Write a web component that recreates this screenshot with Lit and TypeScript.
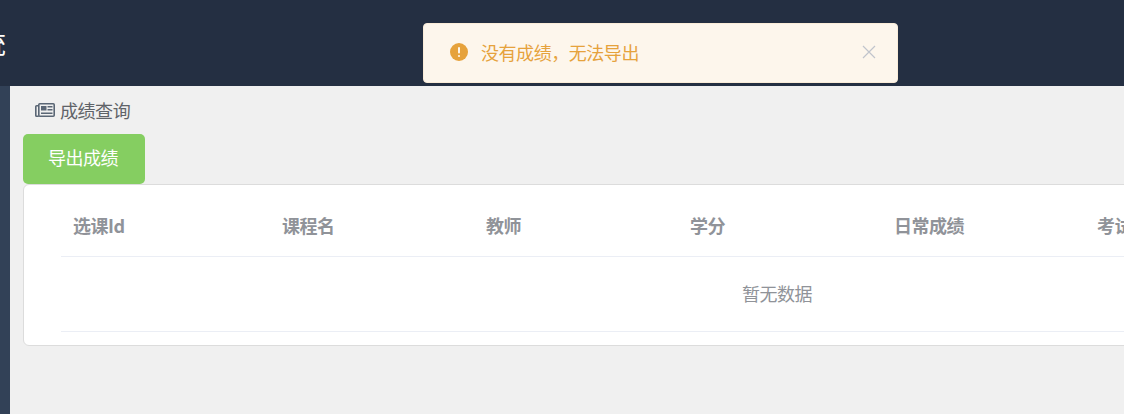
import { LitElement, html, css } from "lit";
import { customElement } from "lit/decorators.js";

const COLS: [string, number][] = [
  ["选课Id", 209],
  ["课程名", 204],
  ["教师", 204],
  ["学分", 204],
  ["日常成绩", 203],
  ["考试成绩", 204],
  ["总成绩", 204],
];

@customElement("app-root")
export class AppRoot extends LitElement {
  static styles = css`
    :host {
      display: block;
      position: relative;
      width: 1124px;
      height: 414px;
      overflow: hidden;
      background: #f0f0f0;
      font-family: "Noto Sans CJK SC", "Liberation Sans", sans-serif;
    }
    .header {
      height: 86px;
      background: #242f42;
      display: flex;
      align-items: center;
      overflow: hidden;
    }
    .logo {
      width: 6px;
      flex: none;
      display: flex;
      justify-content: flex-end;
      white-space: nowrap;
      color: #fff;
      font-size: 27px;
      line-height: 34px;
    }
    .body {
      display: flex;
      height: 328px;
    }
    .side {
      width: 10px;
      flex: none;
      background: #324157;
    }
    .main {
      flex: 1;
      min-width: 0;
      padding-left: 13px;
    }
    .crumb {
      height: 48px;
      box-sizing: border-box;
      padding: 12px 0 0 12px;
      display: flex;
      align-items: flex-start;
      gap: 5px;
      color: #5f6368;
      font-size: 18px;
      line-height: 24px;
      letter-spacing: -0.45px;
    }
    .crumb svg {
      margin-top: 5px;
      flex: none;
    }
    .btn {
      display: block;
      width: 122px;
      height: 50px;
      border: 0;
      border-radius: 5px;
      padding: 0 2px 4px 0;
      background: #85ce61;
      color: #fff;
      font: inherit;
      font-size: 18px;
      letter-spacing: -0.5px;
    }
    .card {
      width: 1508px;
      height: 162px;
      box-sizing: border-box;
      background: #fff;
      border: 1px solid #dcdcdc;
      border-radius: 6px;
      padding: 0 37px;
    }
    .thead {
      display: flex;
      height: 72px;
      box-sizing: border-box;
      border-bottom: 1px solid #ebeef5;
      align-items: center;
      padding-top: 8px;
    }
    .th {
      flex: none;
      box-sizing: border-box;
      padding-left: 12px;
      color: #909399;
      font-size: 18px;
      font-weight: 700;
      letter-spacing: -0.5px;
    }
    .empty {
      height: 75px;
      box-sizing: border-box;
      border-bottom: 1px solid #ebeef5;
      display: flex;
      align-items: center;
      justify-content: center;
      color: #909399;
      font-size: 18px;
      letter-spacing: -0.5px;
      padding-bottom: 2px;
    }
    .toast {
      position: absolute;
      left: 423px;
      top: 23px;
      width: 475px;
      height: 60px;
      box-sizing: border-box;
      background: #fdf6ec;
      border: 1px solid #faecd8;
      border-radius: 4px;
      display: flex;
      align-items: center;
      padding: 0 21px 2px 26px;
      color: #e6a23c;
      font-size: 18px;
      letter-spacing: -0.45px;
    }
    .toast .msg {
      flex: 1;
      margin-left: 13px;
    }
  `;

  render() {
    return html`
      <div class="header"><div class="logo">学生成绩管理系统</div></div>
      <div class="body">
        <div class="side"></div>
        <div class="main">
          <div class="crumb">
            <svg width="20" height="14" viewBox="0 0 20 14" fill="none" stroke="#5a6675" stroke-width="1.6">
              <rect x="3.8" y="0.8" width="15.4" height="12.4" rx="1"></rect>
              <path d="M3.8 2.8H1.6a.8.8 0 0 0-.8.8v8.8a.8.8 0 0 0 .8.8h2.2"></path>
              <rect x="6" y="3" width="5.5" height="4.5" fill="#5a6675" stroke="none"></rect>
              <path d="M12.5 3.8h5M12.5 6.8h5M6 10.3h11.5"></path>
            </svg>
            <span>成绩查询</span>
          </div>
          <button class="btn">导出成绩</button>
          <div class="card">
            <div class="thead">
              ${COLS.map(([t, w]) => html`<div class="th" style="width:${w}px">${t}</div>`)}
            </div>
            <div class="empty">暂无数据</div>
          </div>
        </div>
      </div>
      <div class="toast">
        <svg width="18" height="18" viewBox="0 0 18 18">
          <circle cx="9" cy="9" r="9" fill="#e6a23c"></circle>
          <rect x="8" y="4" width="2" height="6.5" rx="1" fill="#fdf6ec"></rect>
          <circle cx="9" cy="13" r="1.1" fill="#fdf6ec"></circle>
        </svg>
        <span class="msg">没有成绩，无法导出</span>
        <svg width="14" height="14" viewBox="0 0 14 14" stroke="#c0c4cc" stroke-width="1.2">
          <path d="M1 1l12 12M13 1L1 13"></path>
        </svg>
      </div>
    `;
  }
}
